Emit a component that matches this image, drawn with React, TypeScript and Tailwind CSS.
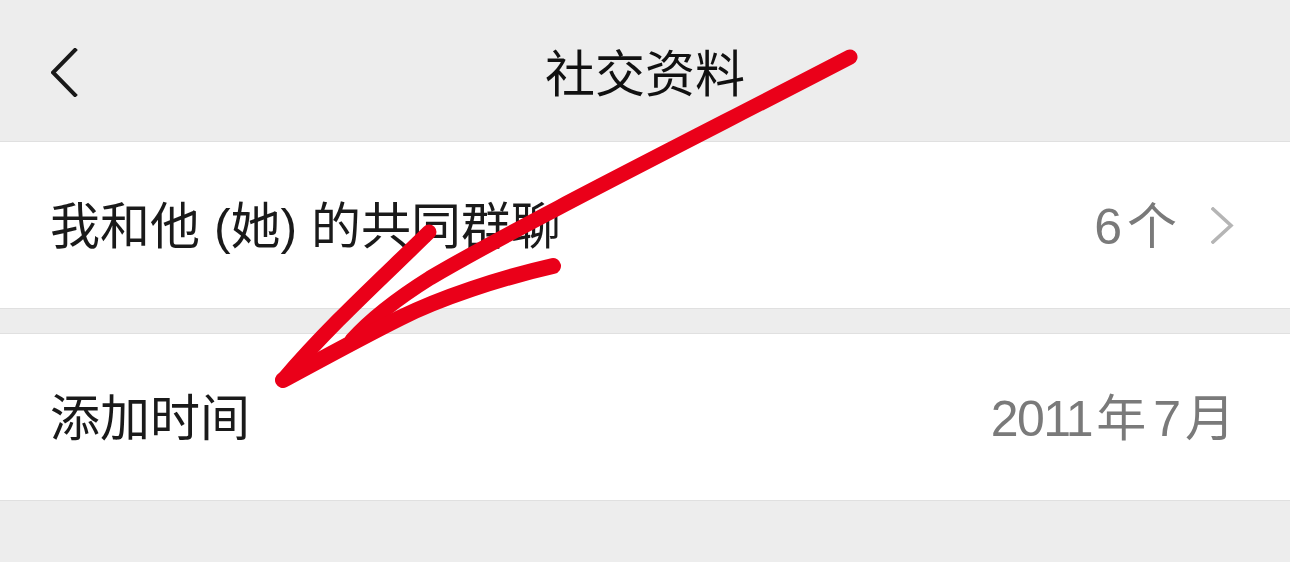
import React from 'react';

const FONT = '"Liberation Sans", "Noto Sans CJK SC", sans-serif';

function Chevron({ dir, className }: { dir: 'left' | 'right'; className?: string }) {
  const d = dir === 'left' ? 'M24 2 L2 24.5 L24 47' : 'M2 2 L20 18.5 L2 35';
  return (
    <svg className={className} viewBox={dir === 'left' ? '0 0 28 49' : '0 0 24 37'} fill="none">
      <path d={d} stroke="currentColor" strokeWidth={dir === 'left' ? 4 : 3.6} strokeLinecap="square" />
    </svg>
  );
}

function Row({ label, children, arrow, className }: { label: string; children: React.ReactNode; arrow?: boolean; className?: string }) {
  return (
    <div className={`flex items-center justify-between bg-white pl-[50px] pr-[55px] ${className ?? ''}`}>
      <span className="mt-[3px] text-[50px] leading-none text-[#1a1a1a]">{label}</span>
      <div className="flex items-center">
        <span className="mt-[3px] flex items-baseline text-[50px] leading-none text-[#7a7a7a]">{children}</span>
        {arrow && <Chevron dir="right" className="ml-[34px] h-[37px] w-[24px] text-[#b5b5b5]" />}
      </div>
    </div>
  );
}

export default function App() {
  return (
    <div className="relative min-h-screen w-full overflow-hidden bg-[#ededed]" style={{ fontFamily: FONT }}>
      <header className="relative flex h-[142px] items-center justify-center border-b border-[#e0e0e0]">
        <button className="absolute left-[51px] top-[48px] text-[#191919]">
          <Chevron dir="left" className="h-[49px] w-[28px]" />
        </button>
        <h1 className="mt-[8px] text-[50px] font-normal leading-none text-[#111111]">社交资料</h1>
      </header>

      <Row label="我和他 (她) 的共同群聊" arrow className="h-[167px] border-b border-[#e0e0e0]">
        <span>6</span>
        <span className="ml-[5px]">个</span>
      </Row>
      <div className="h-[24px]" />
      <Row label="添加时间" className="h-[168px] border-y border-[#e0e0e0]">
        <span className="tracking-[-1.5px]">2011</span>
        <span className="ml-[4px]">年</span>
        <span className="ml-[7px]">7</span>
        <span className="ml-[4px]">月</span>
      </Row>

      {/* hand-drawn red arrow on top */}
      <svg className="pointer-events-none absolute left-0 top-0" width="1290" height="562" viewBox="0 0 1290 562" fill="none">
        <g stroke="#ea0019" strokeLinecap="round" strokeLinejoin="round">
          <path d="M850 57 C 700 135, 520 225, 430 278 C 395 300, 370 320, 352 340" strokeWidth="15" />
          <path d="M553 266 C 500 278, 440 298, 400 318 C 360 338, 320 360, 283 380" strokeWidth="16" />
          <path d="M429 232 C 380 280, 330 325, 283 380" strokeWidth="15" />
        </g>
      </svg>
    </div>
  );
}
